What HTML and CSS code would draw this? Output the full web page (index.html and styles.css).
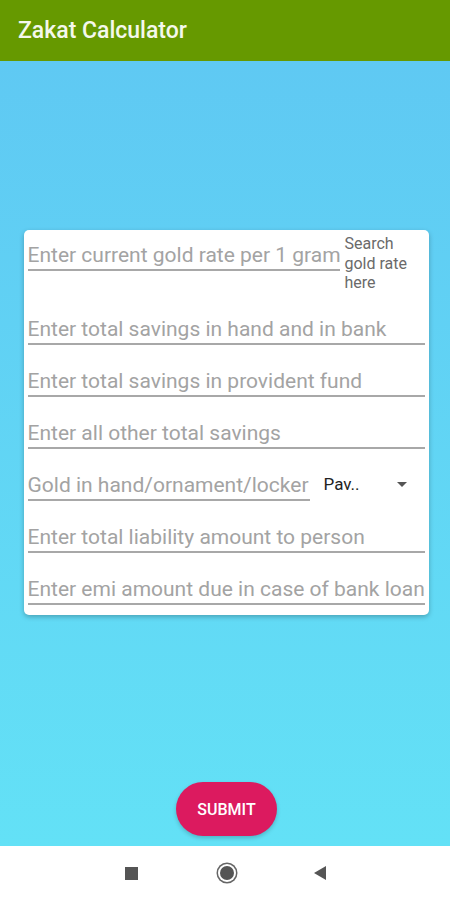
FILE: index.html
```html
<!DOCTYPE html>
<html lang="en">
<head>
    <meta charset="UTF-8">
    <meta name="viewport" content="width=device-width, initial-scale=1.0">
    <title>Zakat Calculator</title>
    <link rel="stylesheet" href="styles.css">
</head>
<body>
    <header class="app-bar">Zakat Calculator</header>

    <main class="content">
        <div class="card">
            <div class="row">
                <div class="field field-rate">Enter current gold rate per 1 gram</div>
                <div class="search-link">Search gold rate here</div>
            </div>
            <div class="field">Enter total savings in hand and in bank</div>
            <div class="field">Enter total savings in provident fund</div>
            <div class="field">Enter all other total savings</div>
            <div class="row row-gold">
                <div class="field field-gold">Gold in hand/ornament/locker</div>
                <div class="spinner">
                    <span>Pav..</span>
                    <span class="arrow"></span>
                </div>
            </div>
            <div class="field">Enter total liability amount to person</div>
            <div class="field">Enter emi amount due in case of bank loan</div>
        </div>

        <button class="submit">SUBMIT</button>
    </main>

    <!-- system navigation -->
    <nav class="nav-bar">
        <span class="nav-square"></span>
        <span class="nav-home"></span>
        <span class="nav-back"></span>
    </nav>
</body>
</html>
```

FILE: styles.css
```css
html, body {
    height: 100%;
}
body {
    margin: 0;
    font-family: Roboto, "Noto Sans", sans-serif;
    display: flex;
    flex-direction: column;
    height: 900px;
    overflow: hidden;
}

.app-bar {
    height: 61px;
    box-sizing: border-box;
    background-color: #669900;
    color: #f4f8ec;
    font-size: 23px;
    font-weight: 500;
    padding: 17px 0 0 18px;
    flex-shrink: 0;
}

.content {
    flex: 1;
    display: flex;
    flex-direction: column;
    align-items: center;
    background: linear-gradient(to bottom, #5fc9f3, #63e1f6);
}

.card {
    width: 405px;
    box-sizing: border-box;
    margin-top: 169px;
    margin-left: 2px;
    padding: 4px 4px 10px 4px;
    background-color: #fff;
    border-radius: 5px;
    box-shadow: 0 2px 5px rgba(0, 0, 0, 0.25);
}

.row {
    display: flex;
    align-items: flex-start;
}

.field {
    box-sizing: border-box;
    height: 34px;
    padding-top: 4px;
    line-height: 28px;
    margin-top: 18px;
    border-bottom: 2px solid #a8a8a8;
    color: #a3a3a3;
    font-size: 21px;
    white-space: nowrap;
    overflow: hidden;
}
.row .field {
    margin-top: 3px;
}
.field-rate {
    width: 312px;
    flex-shrink: 0;
}
.search-link {
    width: 74px;
    margin-left: 5px;
    font-size: 16px;
    line-height: 19.5px;
    color: #6a6a6a;
}

.row-gold {
    margin-top: 15px;
    align-items: center;
}
.field-gold {
    width: 282px;
    flex-shrink: 0;
}
.spinner {
    flex: 1;
    display: flex;
    align-items: center;
    justify-content: space-between;
    padding: 0 18px 0 14px;
    font-size: 17px;
    color: #222;
    margin-top: 4px;
}
.arrow {
    width: 0;
    height: 0;
    border-left: 5px solid transparent;
    border-right: 5px solid transparent;
    border-top: 5px solid #555;
}

.submit {
    margin-top: auto;
    margin-bottom: 10px;
    margin-left: 3px;
    width: 101px;
    height: 54px;
    border: none;
    border-radius: 27px;
    background-color: #dc1a5f;
    color: #fff;
    font-family: Roboto, sans-serif;
    font-size: 16px;
    font-weight: 500;
    box-shadow: 0 2px 4px rgba(0, 0, 0, 0.2);
}

.nav-bar {
    height: 54px;
    flex-shrink: 0;
    background-color: #fff;
    display: flex;
    align-items: center;
    justify-content: center;
    gap: 80px;
}
.nav-square {
    width: 13px;
    height: 13px;
    background-color: #555;
    margin-right: 2px;
}
.nav-home {
    width: 14px;
    height: 14px;
    border-radius: 50%;
    background-color: #555;
    box-shadow: 0 0 0 2px #fff, 0 0 0 3.5px #666;
}
.nav-back {
    width: 0;
    height: 0;
    border-top: 7px solid transparent;
    border-bottom: 7px solid transparent;
    border-right: 12px solid #555;
}
```
